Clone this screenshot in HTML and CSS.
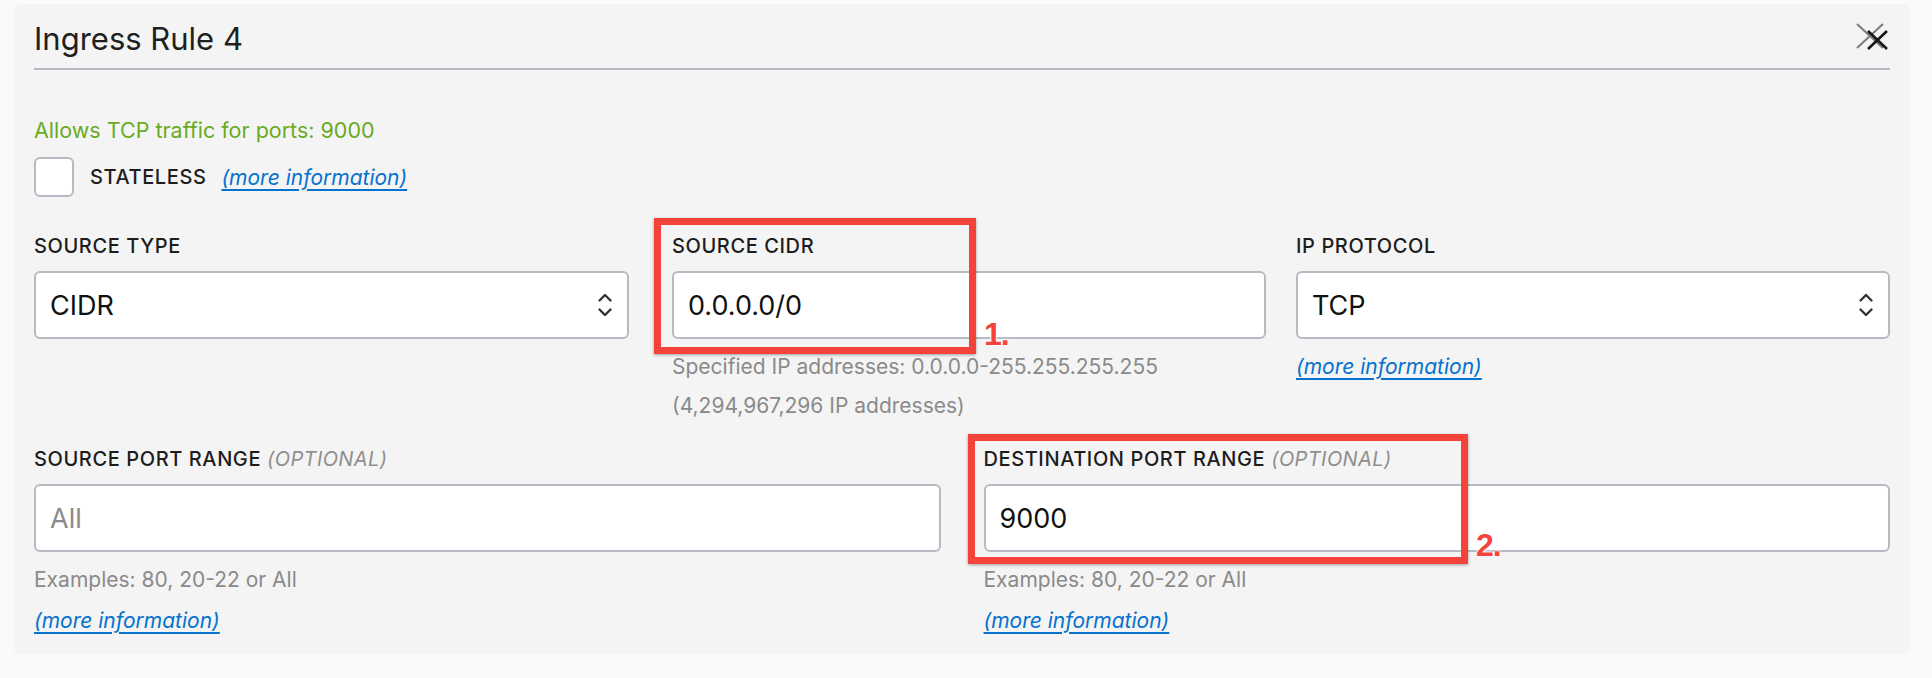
FILE: index.html
```html
<!DOCTYPE html>
<html lang="en">
<head>
<meta charset="utf-8">
<title>Ingress Rule 4</title>
<link rel="stylesheet" href="styles.css">
</head>
<body>
<div class="page">
  <section class="panel">
    <header class="panel-head">
      <h2 class="panel-title">Ingress Rule 4</h2>
      <button class="close" type="button" aria-label="Remove rule">
        <svg width="34" height="28" viewBox="0 0 34 28">
          <path d="M1 1 L27 25 M27 1 L1 25" stroke="#7a7a7a" stroke-width="2" fill="none"/>
          <path d="M12 8 L31 26 M31 8 L12 26" stroke="#161616" stroke-width="2.6" fill="none"/>
        </svg>
      </button>
    </header>

    <p class="summary">Allows TCP traffic for ports: 9000</p>

    <div class="check-row">
      <span class="checkbox"></span>
      <span class="check-label">STATELESS</span>
      <a class="info" href="#">(more information)</a>
    </div>

    <div class="grid3">
      <div class="field">
        <label class="label">SOURCE TYPE</label>
        <div class="select">
          <span>CIDR</span>
          <svg class="updown" width="16" height="26" viewBox="0 0 16 26"><path d="M2.5 8.5 L8 3 L13.5 8.5 M2.5 17.5 L8 23 L13.5 17.5" stroke="#333" stroke-width="2.4" fill="none" stroke-linecap="round" stroke-linejoin="round"/></svg>
        </div>
      </div>
      <div class="field field-cidr">
        <label class="label">SOURCE CIDR</label>
        <input class="input" type="text" value="0.0.0.0/0">
        <p class="help">Specified IP addresses: 0.0.0.0-255.255.255.255</p>
        <p class="help">(4,294,967,296 IP addresses)</p>
      </div>
      <div class="field">
        <label class="label">IP PROTOCOL</label>
        <div class="select">
          <span>TCP</span>
          <svg class="updown" width="16" height="26" viewBox="0 0 16 26"><path d="M2.5 8.5 L8 3 L13.5 8.5 M2.5 17.5 L8 23 L13.5 17.5" stroke="#333" stroke-width="2.4" fill="none" stroke-linecap="round" stroke-linejoin="round"/></svg>
        </div>
        <p class="help"><a class="info" href="#">(more information)</a></p>
      </div>
    </div>

    <div class="grid2">
      <div class="field">
        <label class="label">SOURCE PORT RANGE <em class="optional">(OPTIONAL)</em></label>
        <input class="input" type="text" placeholder="All">
        <p class="help">Examples: 80, 20-22 or All</p>
        <p class="help help-link"><a class="info" href="#">(more information)</a></p>
      </div>
      <div class="field">
        <label class="label">DESTINATION PORT RANGE <em class="optional">(OPTIONAL)</em></label>
        <input class="input" type="text" value="9000">
        <p class="help">Examples: 80, 20-22 or All</p>
        <p class="help help-link"><a class="info" href="#">(more information)</a></p>
      </div>
    </div>
  </section>

  <div class="mark mark-1"></div>
  <span class="mark-num num-1">1.</span>
  <div class="mark mark-2"></div>
  <span class="mark-num num-2">2.</span>
</div>
</body>
</html>
```
FILE: styles.css
```css
* { box-sizing: border-box; }

body {
  margin: 0;
  background: #fafafa;
  font-family: Inter, "Liberation Sans", Arial, sans-serif;
  color: #161513;
}

.page {
  position: relative;
  padding: 4px 22px 25px 14px;
}

.panel {
  background: #f4f4f4;
  border-radius: 6px;
  padding: 0 20px 14px;
}

/* header */
.panel-head {
  display: flex;
  justify-content: space-between;
  align-items: flex-start;
  padding: 15px 0 9px;
  border-bottom: 2px solid #b6bac2;
}

.panel-title {
  margin: 0;
  font-size: 31px;
  line-height: 40px;
  font-weight: 400;
  color: #1f1f1f;
}

.close {
  margin-top: 4px;
  padding: 0;
  border: 0;
  background: none;
  width: 34px;
  height: 28px;
  display: block;
}
.close svg { display: block; }

/* summary */
.summary {
  margin: 45px 0 0;
  font-size: 21.5px;
  line-height: 30px;
  color: #6aab1f;
}

.check-row {
  display: flex;
  align-items: center;
  height: 40px;
  margin-top: 12px;
}

.checkbox {
  width: 40px;
  height: 40px;
  background: #fff;
  border: 2px solid #b6bac2;
  border-radius: 6px;
  margin-right: 16px;
}

.check-label {
  font-size: 20px;
  font-weight: 500;
  letter-spacing: 0.6px;
  color: #1d1d1d;
  margin-right: 15px;
}

.info {
  font-size: 21px;
  font-style: italic;
  color: #0572ce;
  text-decoration: underline;
  text-decoration-thickness: 2px;
  text-underline-offset: 4px;
}

/* grids */
.grid3 {
  display: grid;
  grid-template-columns: 595px 1fr 594px;
  column-gap: 30px;
  margin-top: 36px;
}

.field-cidr { padding-left: 13px; }

.grid2 {
  display: grid;
  grid-template-columns: 1fr 1fr;
  column-gap: 43px;
  margin-top: 21px;
}

.field { display: flex; flex-direction: column; }

.label {
  display: block;
  font-size: 20px;
  font-weight: 500;
  line-height: 26px;
  letter-spacing: 0.6px;
  color: #1d1d1d;
  margin-bottom: 12px;
}

.optional {
  font-style: italic;
  font-weight: 400;
  color: #8f8f8f;
  letter-spacing: 0.4px;
}

.select,
.input {
  height: 68px;
  width: 100%;
  background: #fff;
  border: 2px solid #b6bac2;
  border-radius: 6px;
  font-family: inherit;
  font-size: 27px;
  color: #111;
}

.select {
  display: flex;
  align-items: center;
  justify-content: space-between;
  padding: 0 14px 0 14px;
}

.updown { display: block; }

.input {
  padding: 0 14px;
  outline: none;
  margin: 0;
}
.input::placeholder { color: #8a8a8a; }

.help {
  margin: 0;
  font-size: 21px;
  line-height: 39px;
  color: #8a8a8a;
}
.field > .help:first-of-type { margin-top: 8px; }
.help-link { margin-top: 2px; }

/* annotation overlays */
.mark {
  position: absolute;
  border: 7px solid #f4433a;
  box-shadow: 0 1px 3px rgba(0, 0, 0, 0.35);
}
.mark-1 { left: 654px; top: 218px; width: 322px; height: 136px; }
.mark-2 { left: 968px; top: 434px; width: 500px; height: 130px; }

.mark-num {
  position: absolute;
  font-family: "Liberation Sans", Arial, sans-serif;
  font-weight: 700;
  font-size: 32px;
  line-height: 32px;
  letter-spacing: -1px;
  color: #f4433a;
  text-shadow: 0 0 2px #fff, 0 0 2px #fff, 0 0 3px #fff;
}
.num-1 { left: 984px; top: 318px; }
.num-2 { left: 1476px; top: 529px; }
```
